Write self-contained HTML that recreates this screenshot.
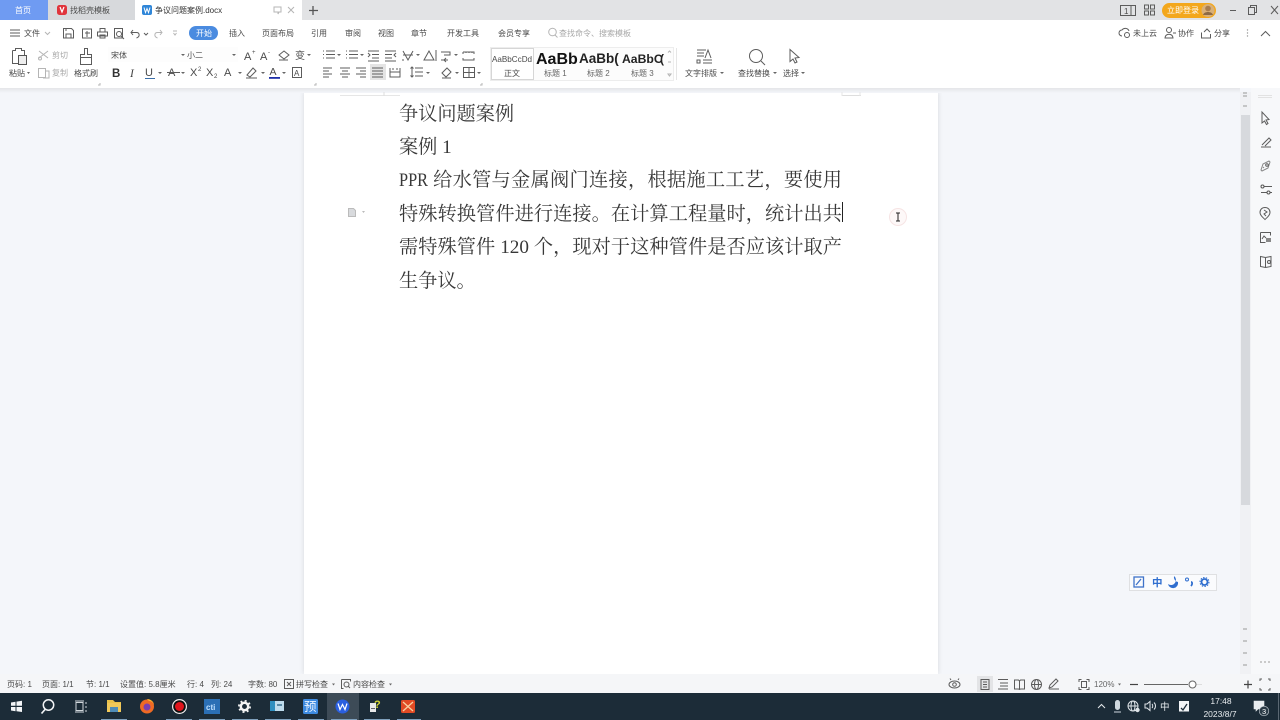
<!DOCTYPE html>
<html lang="zh"><head><meta charset="utf-8"><title>争议问题案例.docx</title>
<style>
html,body{margin:0;padding:0;width:1280px;height:720px;overflow:hidden;background:#f4f6fa}
body{position:relative;font-family:"Liberation Sans","Noto Sans CJK SC",sans-serif}
.l{position:absolute;left:399px;width:443px;height:33px;line-height:33px;font-size:19.2px;color:#383838;white-space:nowrap;font-family:"Liberation Serif","Noto Serif CJK SC",serif}
.j{text-align:justify;text-align-last:justify;white-space:normal}
.p{display:inline-block;width:29px;transform:scaleX(.85);transform-origin:left center}
#page{position:absolute;left:304px;top:92px;width:634px;height:582px;background:#fff;box-shadow:0 0 5px rgba(0,0,0,.12)}
svg{position:absolute;left:0;top:0;filter:blur(.3px)}
text{font-family:"Liberation Sans","Noto Sans CJK SC",sans-serif;font-size:8px;fill:#4a4a4a}
.g{fill:#a8a8a8}
.i{fill:none;stroke:#5c5c5c;stroke-width:1}
.d{fill:none;stroke:#b5b5b5;stroke-width:1}
.a{fill:#666}
</style></head><body>
<div id="page"></div>
<div class="l" style="top:98px">争议问题案例</div>
<div class="l" style="top:131px">案例 1</div>
<div class="l j" style="top:164px"><span class="p">PPR</span> 给水管与金属阀门连接，根据施工工艺，要使用</div>
<div class="l j" style="top:198px">特殊转换管件进行连接。在计算工程量时，统计出共</div>
<div class="l j" style="top:231px">需特殊管件 120 个，现对于这种管件是否应该计取产</div>
<div class="l" style="top:265px">生争议。</div>

<svg width="1280" height="720" viewBox="0 0 1280 720">
<defs><linearGradient id="sh" x1="0" y1="0" x2="0" y2="1"><stop offset="0" stop-color="#e4e5e8"/><stop offset="1" stop-color="#f4f6fa"/></linearGradient></defs>
<!-- title bar -->
<rect width="1280" height="20" fill="#e2e3e5"/>
<rect width="48" height="20" fill="#6f9bf2"/>
<text x="15" y="13" style="fill:#fff">首页</text>
<rect x="48" width="87" height="20" fill="#d7d9dc"/>
<rect x="57" y="5" width="10" height="10" rx="2.5" fill="#e0343c"/>
<path d="M60 7l2 5 2-5" fill="none" stroke="#fff" stroke-width="1.2"/>
<text x="70" y="13">找稻壳模板</text>
<rect x="135" width="167" height="20" fill="#fff"/>
<rect x="142" y="5" width="10" height="10" rx="2" fill="#2f86d8"/>
<path d="M144 7.5l1.5 5 1.5-4 1.5 4 1.5-5" fill="none" stroke="#fff" stroke-width="1"/>
<text x="155" y="13" style="fill:#333">争议问题案例.docx</text>
<path d="M274 7h7v5h-2l-1 2v-2h-4z" class="d"/>
<path d="M288 7l6 6M294 7l-6 6" class="d"/>
<path d="M313 6v9M309 10.500h9" stroke="#555" stroke-width="1.300" fill="none"/>
<!-- title right -->
<path d="M1120.500 5.500h15v10h-15zM1131 5.500v10" class="i"/><text x="1124" y="14" style="font-size:8px">1</text>
<path d="M1144.500 5h4v4h-4zM1150.500 5h4v4h-4zM1144.500 11h4v4h-4zM1150.500 11h4v4h-4z" class="i"/>
<rect x="1162" y="3" width="54" height="15" rx="7.500" fill="#f3a71c"/>
<text x="1167" y="13" style="fill:#fff">立即登录</text>
<circle cx="1208" cy="10.500" r="6.500" fill="#d9b078"/><circle cx="1208" cy="8.500" r="2.800" fill="#a87c4e"/><path d="M1203 15c1-4 9-4 10 0z" fill="#8d6a44"/>
<path d="M1230 10.500h6" class="i"/>
<path d="M1248.500 7.500h6v7h-6zM1250.500 7.500v-2h6v7h-2" class="i"/>
<path d="M1271 6l7 8M1278 6l-7 8" class="i"/>

<!-- ribbon -->
<rect y="20" width="1280" height="68" fill="#fff"/>
<rect y="88" width="1240" height="5" fill="url(#sh)"/>
<path d="M10 30h10M10 33h10M10 36h10" class="i"/>
<text x="24" y="36">文件</text><path d="M45 32l2.500 2.500 2.500-2.500" class="d"/>
<path d="M63.500 28.500h8l2 2v7.500h-10zM66 38v-4h5v4M66 29v2" class="i"/>
<path d="M82.500 29h9v9h-9zM85 33h5M87 31v6" class="i"/>
<path d="M100 32v-3.500h5v3.500M97.500 32h10v4h-10zM100 35h5v3h-5z" class="i"/>
<path d="M114.500 28.500h8v9.500h-8z" class="i"/><circle cx="119" cy="34" r="2.500" class="i"/><path d="M121 36l3 3" class="i"/>
<path d="M133 30l-2 2.500 2 2.500M131.500 32.500h5c3 0 4 4 0 5.500" class="i"/><path d="M144 33l2 2 2-2" class="i" stroke-width=".8"/>
<path d="M160 30l2 2.500-2 2.500M161.500 32.500h-4c-3 0-4 4 0 5.500" class="d"/>
<path d="M173 31h4M173.500 33l1.500 2 1.500-2" class="d"/>
<rect x="189" y="26" width="29" height="14" rx="7" fill="#4a8be0"/>
<text x="196" y="36" style="fill:#fff">开始</text>
<text x="229" y="36">插入</text><text x="262" y="36">页面布局</text><text x="311" y="36">引用</text><text x="345" y="36">审阅</text><text x="378" y="36">视图</text><text x="411" y="36">章节</text><text x="447" y="36">开发工具</text><text x="498" y="36">会员专享</text>
<circle cx="552.500" cy="32" r="3.800" class="d"/><path d="M555 35l2.500 2.500" class="d"/>
<text x="559" y="36" class="g">查找命令、搜索模板</text>
<!-- title row right -->
<path d="M1122 36a3 3 0 0 1 0-6 4 4 0 0 1 7 1" class="i"/><circle cx="1127" cy="35" r="2.500" class="i"/>
<text x="1133" y="36">未上云</text>
<circle cx="1169" cy="30" r="2.500" class="i"/><path d="M1165 38c0-5 8-5 8 0zM1173 33h3" class="i"/>
<text x="1178" y="36">协作</text>
<path d="M1201.500 32.500v5.500h9v-4M1204 32l3-3 3 3" class="i"/>
<text x="1214" y="36">分享</text>
<circle cx="1247.500" cy="30" r=".7" fill="#999"/><circle cx="1247.500" cy="33" r=".7" fill="#999"/><circle cx="1247.500" cy="36" r=".7" fill="#999"/>
<path d="M1261 36l4.500-4.500 4.500 4.500" class="i"/>

<!-- clipboard -->
<path d="M12.500 50.500h3v-2h6v2h3v5M12.500 50.500v13h7" class="i"/><rect x="18.500" y="55.500" width="8" height="9" fill="#eee" stroke="#555"/>
<text x="9" y="76">粘贴</text><path d="M27 72h3l-1.500 2z" class="a"/>
<path d="M39 51l9 7M39 58l9-7" class="d"/><circle cx="40" cy="58.500" r="1.500" class="d"/>
<text x="52" y="58" class="g">剪切</text>
<path d="M38.500 68.500h7v9h-7zM46 71h3v7h-6" class="d"/>
<text x="52" y="75.500" class="g">复制</text>
<path d="M84.500 48.500h3v6h4v3h-11v-3h4zM80.500 57.500h11v7h-11z" class="i"/>
<text x="74" y="76">格式刷</text>
<!-- font -->
<rect x="108" y="47" width="130" height="15" fill="#fdfdfd"/>
<text x="111" y="58">宋体</text><path d="M181 54h4l-2 2z" class="a"/>
<text x="187" y="58">小二</text><path d="M232 54h4l-2 2z" class="a"/>
<text x="244" y="60" style="font-size:11px">A</text><text x="252" y="54" style="font-size:6px">+</text>
<text x="260" y="60" style="font-size:11px">A</text><text x="268" y="54" style="font-size:6px">-</text>
<path d="M279 55l5-4 5 4-5 4zM279 60h9" class="i"/>
<text x="295" y="59" style="font-size:10px">变</text><path d="M307 54h4l-2 2z" class="a"/>
<text x="112" y="77" style="font-size:11.500px;font-weight:bold;fill:#333">B</text>
<text x="130" y="77" style="font-size:11.500px;font-style:italic;fill:#444;font-family:'Liberation Serif',serif">I</text>
<text x="145" y="76" style="font-size:11px">U</text><path d="M145 78.500h10" class="i" style="stroke:#3b6ea8"/><path d="M158 72h4l-2 2z" class="a"/>
<text x="168" y="76" style="font-size:11px">A</text><path d="M167 72.500h13" class="i"/><path d="M181 72h4l-2 2z" class="a"/>
<text x="190" y="76" style="font-size:11px">X</text><text x="198" y="71" style="font-size:6px">2</text>
<text x="206" y="76" style="font-size:11px">X</text><text x="214" y="78" style="font-size:6px">2</text>
<text x="224" y="76" style="font-size:11px">A</text><path d="M238 72h4l-2 2z" class="a"/>
<path d="M247 75l6-7 3 3-6 6zM246 78h11" class="i"/><path d="M261 72h4l-2 2z" class="a"/>
<text x="269.500" y="75" style="font-size:10.500px">A</text><rect x="269" y="77" width="11" height="1.800" fill="#1e2fa8"/><path d="M282 72h4l-2 2z" class="a"/>
<rect x="292.500" y="67.500" width="9" height="10" class="i"/><text x="294" y="76" style="font-size:8px">A</text>
<path d="M98 85h2v-2M314 85h2v-2" class="d"/>
<!-- paragraph row 1 -->
<path d="M326 51h9M326 54.500h9M326 58h9M323 51h1M323 54.500h1M323 58h1" class="i"/><path d="M337 54h4l-2 2z" class="a"/>
<path d="M349 51h9M349 54.500h9M349 58h9M346 51h1M346 54.500h1M346 58h1" class="i"/><path d="M360 54h4l-2 2z" class="a"/>
<path d="M368 51h11M372 54.500h7M372 58h7M368 61h11M368 53l2 2-2 2" class="i"/>
<path d="M385 51h11M385 54.500h7M385 58h7M385 61h11M396 53l-2 2 2 2" class="i"/>
<path d="M403 51l5 9 5-9M403 55h10M402 60h2" class="i"/><path d="M416 54h4l-2 2z" class="a"/>
<path d="M424 60l5-9 5 9zM436 50v11" class="i"/>
<path d="M441 52h9v3h-6M441 60h7M446 58l-2 2 2 2" class="i"/><path d="M454 54h4l-2 2z" class="a"/>
<path d="M463 52h11v2M463 52v2M466 52v1M469 52v1M472 52v1M463 58v2h11v-2" class="i"/>
<!-- paragraph row 2 -->
<path d="M323 68h9M323 71h6M323 74h9M323 77h6" class="i"/>
<path d="M340 68h10M342 71h6M340 74h10M342 77h6" class="i"/>
<path d="M356 68h10M360 71h6M356 74h10M360 77h6" class="i"/>
<rect x="370" y="64" width="16" height="16" fill="#e4e4e4"/>
<path d="M372 68h11M372 71h11M372 74h11M372 77h11" class="i"/>
<path d="M390 68v9h10v-9M390 72h10M393 68v2M397 68v2" class="i"/>
<path d="M415 68h8M415 72h8M415 76h8M412 67v10M410.500 68.500l1.500-1.500 1.500 1.500M410.500 75.500l1.500 1.500 1.500-1.500" class="i"/><path d="M426 72h4l-2 2z" class="a"/>
<path d="M442 73l5-5 4 4-5 5z M442 78h9" class="i"/><path d="M455 72h4l-2 2z" class="a"/>
<path d="M463.500 67.500h11v10h-11zM469 67.500v10M463.500 72.500h11" class="i"/><path d="M477 72h4l-2 2z" class="a"/>
<path d="M480 85h2v-2" class="d"/>
<!-- styles -->
<rect x="490.500" y="47.500" width="183" height="33" fill="#fcfcfc" stroke="#ededed"/>
<rect x="491.500" y="48.500" width="42" height="31" fill="#fff" stroke="#d6d6d6"/>
<text x="492" y="62" style="font-size:8.100px">AaBbCcDd</text>
<text x="504" y="76">正文</text>
<text x="536" y="64" style="font-size:16px;font-weight:bold;fill:#111">AaBb</text>
<text x="544" y="76" style="fill:#666">标题 1</text>
<text x="579" y="63" style="font-size:13.500px;font-weight:bold;fill:#222">AaBb(</text>
<text x="587" y="76" style="fill:#666">标题 2</text>
<text x="622" y="63" style="font-size:12.200px;font-weight:bold;fill:#222">AaBbC</text><text x="660" y="63" style="font-size:12px;font-weight:bold;fill:#222">(</text>
<text x="631" y="76" style="fill:#666">标题 3</text>
<path d="M668 52.500l1.500-1.500 1.500 1.500M668 62h3M668 74h3l-1.500 2z" class="d"/>
<path d="M676.500 48v32" stroke="#e6e6e6"/>
<path d="M697 50h9M697 53h7M697 56h7M697 60h3v3h-3zM703 60h9M703 63h9M705 58l3-8 3 8" class="i"/>
<text x="685" y="76">文字排版</text><path d="M720 72h4l-2 2z" class="a"/>
<circle cx="756" cy="56" r="6.500" class="i"/><path d="M761 61l4 4" class="i"/>
<text x="738" y="76">查找替换</text><path d="M773 72h4l-2 2z" class="a"/>
<path d="M790 49.500v12l3-2.500 2 4 2-1-2-4 4-.5z" class="i"/>
<text x="783" y="76">选择</text><path d="M801 72h4l-2 2z" class="a"/>

<!-- doc marks -->
<path d="M340 95.500h60" stroke="#e6e6e6"/><path d="M384 92v4" stroke="#dedede"/>
<path d="M842 95.500h19" stroke="#dedede"/><path d="M842 92v4M860 92v4" stroke="#e6e6e6"/>
<path d="M348.500 208.500h5l2 2v6h-7z" fill="#d8dadd" stroke="#bbb"/><path d="M362 211h3l-1.500 2z" fill="#bbb"/>
<path d="M842.500 202v20" stroke="#222" stroke-width="1"/>
<circle cx="898" cy="217" r="8.500" fill="#fdf8f8" stroke="#f6e4e4"/>
<path d="M896 213h4M896 221h4M898 213v8" stroke="#222" fill="none"/>

<!-- scrollbar & right panel -->
<rect x="1240" y="92" width="11" height="582" fill="#f0f1f4"/>
<rect x="1241" y="115" width="9" height="390" fill="#d7d9dd"/>
<rect x="1251" y="88" width="29" height="586" fill="#f7f8fa"/>
<path d="M1243 93h4M1243 96h4M1243 106h4M1243 629h4M1243 641h4M1243 653h4M1243 665h4" stroke="#999"/>
<path d="M1258 95.500h14M1258 97.500h14" stroke="#e2e2e2"/>
<path d="M1262 112v11l2.500-2 2 3.500 1.500-1-2-3.500 3-.5z" class="i"/>
<path d="M1261 147h10M1262 145l7-7 2 2-6 6" class="i"/>
<path d="M1261 170l2-6 6-3 1 1-2 6-6 3zM1264 168l-1-1" class="i" style="stroke:#888"/><circle cx="1267" cy="165" r="1.300" class="i"/>
<path d="M1261 186.500h11M1261 192.500h11" class="i"/><circle cx="1262.500" cy="186.500" r="1.500" fill="#fff" stroke="#555"/><circle cx="1268.500" cy="192.500" r="1.500" fill="#fff" stroke="#555"/>
<path d="M1265 207.500c3 0 5 2 5 5 0 3-3 5-5 7-2-2-5-4-5-7 0-3 2-5 5-5z" class="i"/><path d="M1264 210l3 2-3 2 2 2" class="i"/>
<path d="M1260.500 232.500h10v3M1260.500 232.500v10h5M1262 239l2-3 2 2" class="i"/><rect x="1266" y="238" width="5" height="4" fill="#888"/>
<path d="M1265.500 257.500l-5-1v10l5 1 5.500-1v-10zM1265.500 257.500v10" class="i"/><circle cx="1269" cy="262" r="1.500" class="i"/>
<circle cx="1261" cy="662" r="1" fill="#bbb"/><circle cx="1265" cy="662" r="1" fill="#bbb"/><circle cx="1269" cy="662" r="1" fill="#bbb"/>

<!-- IME bar -->
<rect x="1129.500" y="574.500" width="87" height="16" fill="#fafbfd" stroke="#dfe0e2"/>
<rect x="1134" y="577" width="9.500" height="10" fill="none" stroke="#3f73c9" stroke-width="1.300"/><path d="M1136 585l5-6" stroke="#3f73c9" stroke-width="1.300"/>
<text x="1152" y="586" style="font-size:10.500px;fill:#2f6ecf;font-weight:bold">中</text>
<path d="M1174 576a5 5 0 0 1-6 8 5 5 0 0 0 10-2 5 5 0 0 1-4-6z" fill="#2f6ecf"/>
<circle cx="1187" cy="579.500" r="1.500" fill="none" stroke="#2f6ecf"/><path d="M1191 582c1.500 0 1.500 2.500 0 4" stroke="#2f6ecf" stroke-width="1.800" fill="none"/>
<circle cx="1204.500" cy="582" r="3" fill="none" stroke="#2f6ecf" stroke-width="1.800"/><circle cx="1204.500" cy="582" r="4.500" fill="none" stroke="#2f6ecf" stroke-width="1" stroke-dasharray="1.500 1.300"/>

<!-- status -->
<rect y="674" width="1280" height="19" fill="#f5f6f8"/>
<g style="fill:#555">
<text x="7" y="687">页码: 1</text><text x="42" y="687">页面: 1/1</text><text x="86" y="687">节: 1/1</text><text x="120" y="687">设置值: 5.8厘米</text><text x="187" y="687">行: 4</text><text x="211" y="687">列: 24</text><text x="248" y="687">字数: 80</text><text x="296" y="687">拼写检查</text><text x="353" y="687">内容检查</text>
</g>
<rect x="284.500" y="679.500" width="9" height="9" class="i"/><path d="M287 682l4 4M291 682l-4 4" class="i"/>
<path d="M341.500 679.500h9v2M341.500 679.500v9h2" class="i"/><circle cx="346.500" cy="684.500" r="2.500" class="i"/><path d="M348 686l2 2" class="i"/>
<path d="M332 683.500h3l-1.500 2zM389 683.500h3l-1.500 2z" class="a"/>
<ellipse cx="954.500" cy="684.500" rx="5.500" ry="3.500" class="i"/><circle cx="954.500" cy="684.500" r="1.800" class="i"/><path d="M951 680l-1-1.500M958 680l1-1.500" class="i"/>
<rect x="977" y="676" width="16" height="16" fill="#e3e4e6"/>
<path d="M981 679.500h8v10h-8zM983 682h4M983 684.500h4M983 687h4" class="i"/>
<path d="M998 679.500h10M1000 683h8M1000 686h8M998 689h10" class="i"/>
<path d="M1014.500 680h4l1 1 1-1h4v9h-4l-1 .5-1-.5h-4zM1019.500 681v8" class="i"/>
<circle cx="1036.500" cy="684.500" r="5" class="i"/><ellipse cx="1036.500" cy="684.500" rx="2" ry="5" class="i"/><path d="M1031.500 684.500h10" class="i"/>
<path d="M1049 689h10M1049 688l1-3 6-6 2 2-6 6z" class="i"/>
<path d="M1079 682v-2.500h2.500M1086.500 679.500h2.500v2.500M1089 687v2.500h-2.500M1081.500 689.500h-2.500v-2.500" class="i"/><rect x="1081.500" y="681.500" width="5" height="6" class="i"/>
<text x="1094" y="687" style="fill:#666">120%</text><path d="M1118 683.500h3l-1.500 2z" class="a"/>
<path d="M1130 684.500h8" stroke="#444" stroke-width="1.200"/>
<path d="M1144 684.500h44" stroke="#666"/><path d="M1196 684.500h6" stroke="#ddd"/>
<circle cx="1192.500" cy="684.500" r="3.500" fill="#fff" stroke="#666"/>
<path d="M1244 684.500h8M1248 680.500v8" stroke="#444" stroke-width="1.200"/>
<path d="M1260 681v-2h2M1268 679h2v2M1270 688v2h-2M1262 690h-2v-2" class="i"/>

<!-- taskbar -->
<rect y="693" width="1280" height="27" fill="#1c2c38"/>
<rect x="327" y="693" width="32" height="27" fill="#3d4b57"/>
<path d="M101 719.500h26M166 719.500h26M199 719.500h26M232 719.500h26M265 719.500h26M298 719.500h26M331 719.500h26M364 719.500h26M397 719.500h24" stroke="#7fa0bc" stroke-width="1"/>
<path d="M11 702.500l4.500-.7v4h-4.500zM16.500 701.600l5.500-.8v5h-5.500zM11 707h4.500v4.200l-4.500-.7zM16.500 707h5.500v5l-5.500-.8z" fill="#f4f6f8"/>
<circle cx="48.500" cy="705" r="5.200" fill="none" stroke="#f2f4f6" stroke-width="1.500"/><path d="M45 709.500l-3.500 4" stroke="#f2f4f6" stroke-width="1.700"/>
<path d="M76 702.500h7v8h-7zM75 701h9M75 712h9M86 702v2M86 706v2M86 710v2" fill="none" stroke="#cfd6db"/>
<path d="M107 700h6l2 2h6v4h-14z" fill="#e9c14a"/><rect x="107" y="703" width="14" height="9" fill="#f1c95a"/><rect x="110" y="707" width="8" height="5" fill="#4f8cb8"/>
<circle cx="147" cy="706.500" r="7" fill="#ee6a24"/><circle cx="147" cy="707" r="3.500" fill="#7a3fb0"/><path d="M147 699c4 0 7 3 7 6-1-3-3-4-5-4z" fill="#ffb52e"/>
<circle cx="179.500" cy="706.500" r="7.500" fill="#eee"/><circle cx="179.500" cy="706.500" r="6.300" fill="#111"/><circle cx="179.500" cy="706.500" r="4.500" fill="#e0141c"/>
<rect x="204" y="699" width="16" height="15" fill="#2b6fb5"/><text x="206" y="710" style="font-size:8px;fill:#bfe0ff;font-weight:bold">cti</text>
<circle cx="244.500" cy="706.500" r="3.700" fill="none" stroke="#f5f5f5" stroke-width="2.500"/><circle cx="244.500" cy="706.500" r="5.600" fill="none" stroke="#f5f5f5" stroke-width="1.800" stroke-dasharray="2 2.400"/>
<rect x="270" y="701" width="14" height="10" fill="#bfdcec"/><rect x="270" y="701" width="5" height="10" fill="#2f8fbf"/><rect x="277" y="704" width="5" height="2" fill="#5a8aa5"/>
<rect x="303" y="699" width="15" height="15" rx="1.500" fill="#3d8ae0"/><text x="304" y="711" style="font-size:12.500px;fill:#e8f3ff">预</text>
<circle cx="342.500" cy="706.500" r="7" fill="#2a5fe0"/><path d="M338 703.500l2 6 2.500-5 2.500 5 2-6" fill="none" stroke="#fff" stroke-width="1.200"/>
<path d="M370 703h6v9h-6z" fill="#e8e8e8"/><rect x="371" y="708" width="4" height="1" fill="#666"/><text x="374" y="708" style="font-size:11px;font-weight:bold;fill:#d8d830">?</text>
<rect x="401" y="700" width="14" height="13" rx="1.500" fill="#e14a24"/><path d="M403 702l10 9M413 702l-10 9" stroke="#f8d0a0" stroke-width="1.300"/>
<!-- tray -->
<path d="M1098 708l3.500-3.500 3.500 3.500" fill="none" stroke="#e6e9ec" stroke-width="1"/>
<rect x="1115" y="700" width="5" height="10" rx="2.500" fill="#cfd8df"/><path d="M1114 712h7" stroke="#cfd8df"/>
<circle cx="1133" cy="706" r="5" fill="none" stroke="#dfe4e8"/><ellipse cx="1133" cy="706" rx="2" ry="5" fill="none" stroke="#dfe4e8"/><path d="M1128 706h10" stroke="#dfe4e8"/><circle cx="1137.500" cy="710" r="2.200" fill="#dfe4e8"/>
<path d="M1145 704h2l3-2.500v9l-3-2.500h-2zM1152 704c1 1 1 3 0 4M1154 702.500c2 2 2 5 0 7" fill="none" stroke="#dfe4e8"/>
<text x="1160" y="710" style="font-size:9.500px;fill:#e8ecef">中</text>
<rect x="1179" y="701" width="10" height="10.500" fill="#f2f4f6"/><path d="M1181 708l2 2 4-6" fill="none" stroke="#1c2c38" stroke-width="1.300"/>
<text x="1221" y="704" text-anchor="middle" style="font-size:8.500px;fill:#e8ecef">17:48</text>
<text x="1220" y="717" text-anchor="middle" style="font-size:8.500px;fill:#e8ecef">2023/8/7</text>
<path d="M1254 701h10v8h-6l-2 2v-2h-2zM1256 703.500h6M1256 706h6" fill="#e8ecef" stroke="#e8ecef" stroke-width=".6"/>
<circle cx="1264" cy="711" r="4.800" fill="#2a3a46" stroke="#c8d0d6" stroke-width=".6"/><text x="1262" y="714" style="font-size:7.500px;fill:#fff">3</text>
<path d="M1278.500 693v27" stroke="#5a6772"/>
</svg>
</body></html>
